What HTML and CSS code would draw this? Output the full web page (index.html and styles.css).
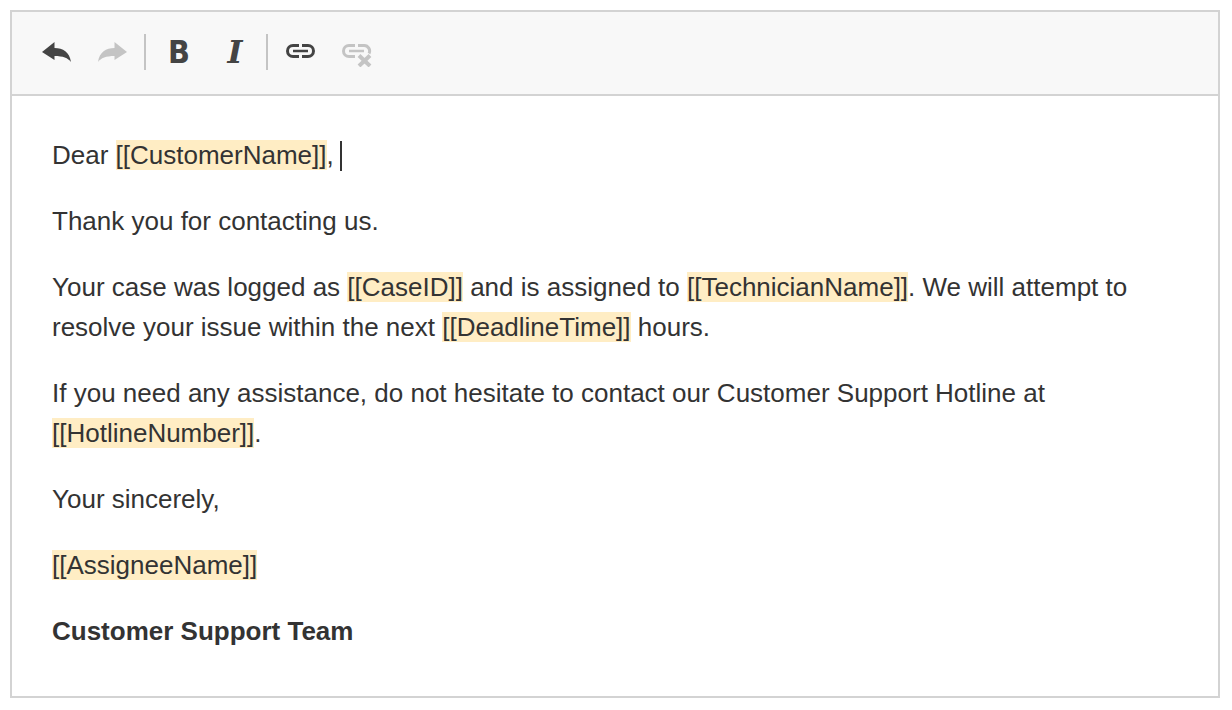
FILE: index.html
```html
<!DOCTYPE html>
<html lang="en">
<head>
<meta charset="utf-8">
<title>Email template editor</title>
<link rel="stylesheet" href="styles.css">
</head>
<body>
<div class="editor">
  <div class="toolbar">
    <div class="group">
      <svg class="icon dark" viewBox="0 0 30 24" width="30" height="24"><path d="M0 12L12.500 2V8C21 8 27.500 12 29 22C26 18 21 16 12.500 16V20Z"/></svg>
      <svg class="icon light" viewBox="0 0 30 24" width="30" height="24"><path d="M29 12L16.500 2V8C8 8 1.500 12 0 22C3 18 8 16 16.500 16V20Z"/></svg>
    </div>
    <div class="group">
      <span class="glyph bold">B</span>
      <span class="glyph italic">I</span>
    </div>
    <div class="group links">
      <svg class="icon line dark-line" viewBox="0 0 29 14" width="29" height="14"><path d="M13 1.500H7a5.500 5.500 0 0 0 0 11H13M16 1.500h6a5.500 5.500 0 0 1 0 11H16"/><path class="bar" d="M7 7H22"/></svg>
      <svg class="icon line light-line" viewBox="0 0 30 23" width="30" height="23"><path d="M13 1.500H7a5.500 5.500 0 0 0 0 11H13M16 1.500h6a5.500 5.500 0 0 1 5 8"/><path class="bar" d="M7 7H22"/><path class="cross" d="M17 11.500L28 22M28 11.500L17 22"/></svg>
    </div>
  </div>
  <div class="content">
    <p>Dear <mark>[[CustomerName]]</mark>, <span class="caret"></span></p>
    <p>Thank you for contacting us.</p>
    <p>Your case was logged as <mark>[[CaseID]]</mark> and is assigned to <mark>[[TechnicianName]]</mark>. We will attempt to resolve your issue within the next <mark>[[DeadlineTime]]</mark> hours.</p>
    <p>If you need any assistance, do not hesitate to contact our Customer Support Hotline at <mark>[[HotlineNumber]]</mark>.</p>
    <p>Your sincerely,</p>
    <p><mark>[[AssigneeName]]</mark></p>
    <p><strong>Customer Support Team</strong></p>
  </div>
</div>
</body>
</html>
```
FILE: styles.css
```css
* { box-sizing: border-box; }
html, body { margin: 0; padding: 0; background: #fff; }
body { padding: 10px 12px 0 10px; font-family: "Liberation Sans", Arial, sans-serif; }
.editor { height: 688px; border: 2px solid #d3d3d3; display: flex; flex-direction: column; }
.toolbar { height: 84px; flex: none; background: #f8f8f8; border-bottom: 2px solid #d3d3d3; display: flex; align-items: center; padding: 0 0 2px 30px; }
.group { display: flex; align-items: center; height: 36px; }
.group + .group { border-left: 2px solid #c4c4c4; }
.group:nth-child(1) { gap: 26px; width: 102px; }
.group:nth-child(2) { gap: 34px; padding: 0 0 0 22px; width: 122px; }
.links { gap: 27px; padding-left: 18px; }
.icon.dark { fill: #444; }
.icon.light { fill: #c4c4c4; }
.icon.line { fill: none; stroke-width: 3; }
.dark-line { stroke: #444; margin-top: -2px; }
.light-line { stroke: #c4c4c4; margin-top: 7px; }
.bar { stroke-width: 2.500; }
.cross { stroke-width: 4; }
.glyph { color: #444; font-size: 32px; line-height: 36px; width: 22px; text-align: center; }
.bold { font-family: "DejaVu Sans", sans-serif; font-weight: 700; font-stretch: condensed; }
.italic { font-family: "DejaVu Serif", serif; font-weight: 700; font-style: italic; }
.content { flex: 1; padding: 39px 40px 0; color: #333; font-size: 26px; line-height: 40.500px; }
.content p { margin: 0 0 25.300px; }
mark { background: #ffedc4; color: inherit; }
strong { font-weight: 700; }
.caret { display: inline-block; width: 2px; height: 30px; background: #333; vertical-align: -7px; margin-left: -1px; }
```
